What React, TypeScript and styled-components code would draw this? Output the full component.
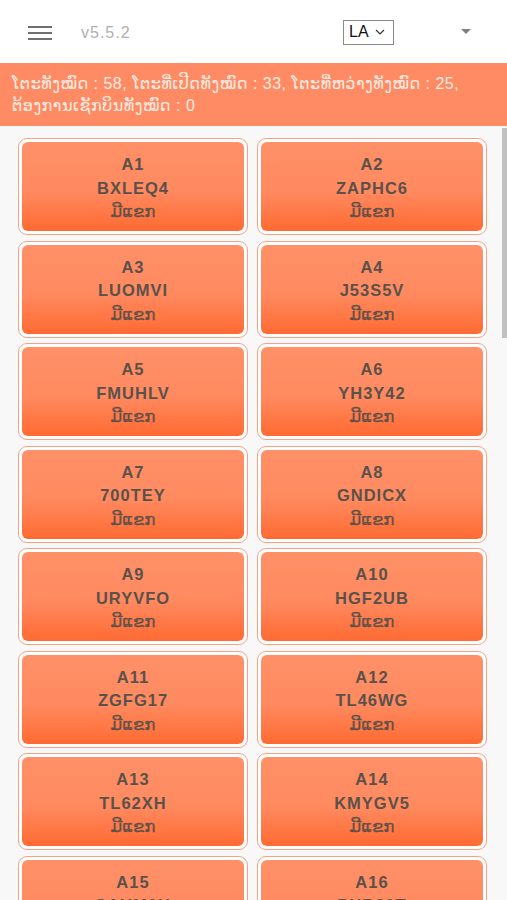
import styled, { createGlobalStyle } from "styled-components";

const GlobalStyle = createGlobalStyle`
  html, body {
    margin: 0;
    padding: 0;
    height: 100%;
    overflow: hidden;
    background: #f8f8f8;
    font-family: "Liberation Sans", "DejaVu Sans", "Noto Sans Lao", sans-serif;
  }
  #root {
    height: 100%;
  }
`;

interface Table {
  name: string;
  code: string;
}

const knownCodes = [
  "BXLEQ4", "ZAPHC6", "LUOMVI", "J53S5V", "FMUHLV", "YH3Y42", "700TEY", "GNDICX",
  "URYVFO", "HGF2UB", "ZGFG17", "TL46WG", "TL62XH", "KMYGV5", "SAUM0H", "PUB80T",
];

const makeCode = (i: number) => {
  const chars = "ABCDEFGHIJKLMNOPQRSTUVWXYZ0123456789";
  let s = "";
  let n = (i + 7) * 2654435761;
  for (let k = 0; k < 6; k++) {
    s += chars[Math.abs(n) % chars.length];
    n = Math.floor(n / 7) + 13 * k;
  }
  return s;
};

const tables: Table[] = Array.from({ length: 58 }, (_, i) => ({
  name: `A${i + 1}`,
  code: knownCodes[i] ?? makeCode(i),
}));

const Page = styled.div`
  display: flex;
  flex-direction: column;
  height: 100vh;
`;

const TopBar = styled.header`
  height: 63px;
  flex-shrink: 0;
  background: #fff;
  display: flex;
  align-items: center;
  padding: 0 28px;
  box-sizing: border-box;
`;

const MenuButton = styled.div`
  width: 24px;
  display: flex;
  flex-direction: column;
  gap: 4px;
  margin-top: 2px;
`;

const MenuLine = styled.span`
  display: block;
  height: 2px;
  background: #6f6f6f;
`;

const Version = styled.span`
  margin-left: 29px;
  margin-top: 3px;
  font-size: 16px;
  letter-spacing: 1px;
  color: #b0b0b0;
`;

const Spacer = styled.div`
  flex: 1;
`;

const LangSelect = styled.div`
  width: 51px;
  height: 25px;
  box-sizing: border-box;
  border: 1px solid #8a8a8a;
  background: #fff;
  display: flex;
  align-items: center;
  gap: 6px;
  padding-left: 5px;
  font-size: 16px;
  color: #111;
  margin-right: 67px;
  margin-top: 1px;
`;

const Caret = styled.span`
  width: 0;
  height: 0;
  border-left: 5px solid transparent;
  border-right: 5px solid transparent;
  border-top: 5px solid #808080;
  margin-right: 8px;
`;

const Summary = styled.div`
  flex-shrink: 0;
  background: #ff8b64;
  color: #fdebe3;
  font-size: 16px;
  letter-spacing: 0.5px;
  line-height: 22px;
  padding: 10px 12px 9px;
  white-space: nowrap;
  overflow: hidden;
`;

const ScrollArea = styled.div`
  flex: 1;
  position: relative;
  min-height: 0;
`;

const Scroller = styled.div`
  height: 100%;
  overflow-y: auto;
  scrollbar-width: none;
  &::-webkit-scrollbar {
    display: none;
  }
`;

const ScrollThumb = styled.div`
  position: absolute;
  top: 2px;
  right: 0;
  width: 5px;
  height: 210px;
  background: #c1c1c1;
`;

const Grid = styled.div`
  display: grid;
  grid-template-columns: 230px 230px;
  column-gap: 9px;
  row-gap: 5.5px;
  padding: 12px 15px 16px 18px;
`;

const CardFrame = styled.div`
  height: 97px;
  box-sizing: border-box;
  border: 1px solid #f7a283;
  border-radius: 9px;
  background: #fff;
  padding: 3px;
`;

const CardFace = styled.div`
  height: 100%;
  box-sizing: border-box;
  padding-top: 4px;
  border-radius: 6px;
  background: linear-gradient(to bottom, #ff9068 0%, #ff8a60 55%, #ff6a32 100%);
  display: flex;
  flex-direction: column;
  align-items: center;
  justify-content: center;
  color: #5b514a;
  font-size: 16.5px;
`;

const CardLine = styled.span<{ $status?: boolean }>`
  display: block;
  height: 23.5px;
  line-height: 23.5px;
  font-weight: ${(p) => (p.$status ? "normal" : "bold")};
  -webkit-text-stroke: ${(p) => (p.$status ? "0.3px #5b514a" : "0")};
  letter-spacing: ${(p) => (p.$status ? "0" : "1px")};
`;

export default function App() {
  return (
    <>
      <GlobalStyle />
      <Page>
        <TopBar>
          <MenuButton>
            <MenuLine />
            <MenuLine />
            <MenuLine />
          </MenuButton>
          <Version>v5.5.2</Version>
          <Spacer />
          <LangSelect>
            LA
            <svg width="10" height="6" viewBox="0 0 10 6" fill="none">
              <path d="M1 1l4 4 4-4" stroke="#333" strokeWidth="1.2" />
            </svg>
          </LangSelect>
          <Caret />
        </TopBar>
        <Summary>
          ໂຕະທັງໝົດ : 58, ໂຕະທີ່ເປີດທັງໝົດ : 33, ໂຕະທີ່ຫວ່າງທັງໝົດ : 25,
          <br />
          ຕ້ອງການເຊັກບິນທັງໝົດ : 0
        </Summary>
        <ScrollArea>
          <Scroller>
            <Grid>
              {tables.map((t) => (
                <CardFrame key={t.name}>
                  <CardFace>
                    <CardLine>{t.name}</CardLine>
                    <CardLine>{t.code}</CardLine>
                    <CardLine $status>ມີແຂກ</CardLine>
                  </CardFace>
                </CardFrame>
              ))}
            </Grid>
          </Scroller>
          <ScrollThumb />
        </ScrollArea>
      </Page>
    </>
  );
}
